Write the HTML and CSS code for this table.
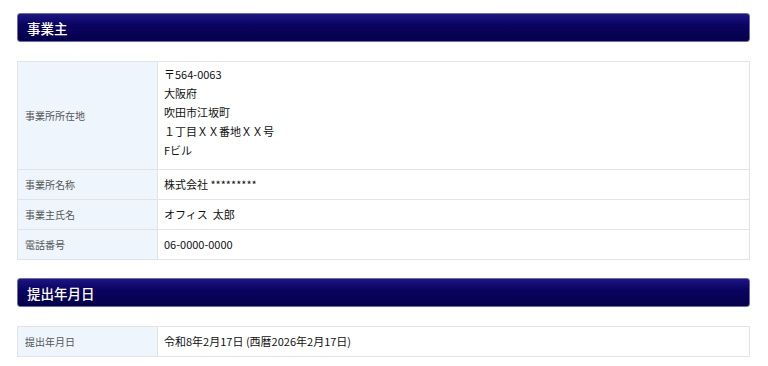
FILE: index.html
```html
<!DOCTYPE html>
<html lang="ja">
<head>
<meta charset="utf-8">
<link rel="stylesheet" href="styles.css">
</head>
<body>
<main class="page">
  <section class="section">
    <h2 class="section-title">事業主</h2>
    <table class="info">
      <tr>
        <th>事業所所在地</th>
        <td class="multi">
          <div>〒564-0063</div>
          <div>大阪府</div>
          <div>吹田市江坂町</div>
          <div>１丁目ＸＸ番地ＸＸ号</div>
          <div>Fビル</div>
        </td>
      </tr>
      <tr><th>事業所名称</th><td>株式会社 *********</td></tr>
      <tr><th>事業主氏名</th><td class="short">オフィス&nbsp; 太郎</td></tr>
      <tr><th>電話番号</th><td>06-0000-0000</td></tr>
    </table>
  </section>
  <section class="section">
    <h2 class="section-title">提出年月日</h2>
    <table class="info">
      <tr><th>提出年月日</th><td>令和8年2月17日 (西暦2026年2月17日)</td></tr>
    </table>
  </section>
</main>
</body>
</html>
```
FILE: styles.css
```css
* { box-sizing: border-box; }
html, body { margin: 0; padding: 0; background: #fff; }
body {
  font-family: "Noto Sans CJK JP", "Noto Sans", sans-serif;
  color: #222;
}
.page {
  width: 733px;
  margin-left: 17px;
  padding-top: 13px;
}
.section { margin-bottom: 18px; }
.section-title {
  margin: 0 0 19px;
  height: 29px;
  padding: 0 9px;
  display: flex;
  align-items: center;
  font-size: 13.5px;
  font-weight: 500;
  color: #fff;
  background: linear-gradient(#1c1585, #0a0460 40%, #05004a);
  border: 1px solid #6e6ab0;
  border-radius: 3px;
}
.info {
  width: 100%;
  border-collapse: collapse;
  border: 1px solid #e0e0e0;
}
.info th, .info td {
  border: 1px solid #e3e3e3;
  text-align: left;
  vertical-align: middle;
  line-height: 19px;
  padding: 4px 6px;
  height: 30px;
}
.info td.short { height: 29px; }
.info th {
  width: 140px;
  padding-left: 7px;
  background: #eef5fd;
  color: #555;
  font-weight: normal;
  font-size: 10px;
}
.info td {
  color: #111;
  font-size: 11px;
}
.info td.multi { padding: 3px 6px 9px; }
```
